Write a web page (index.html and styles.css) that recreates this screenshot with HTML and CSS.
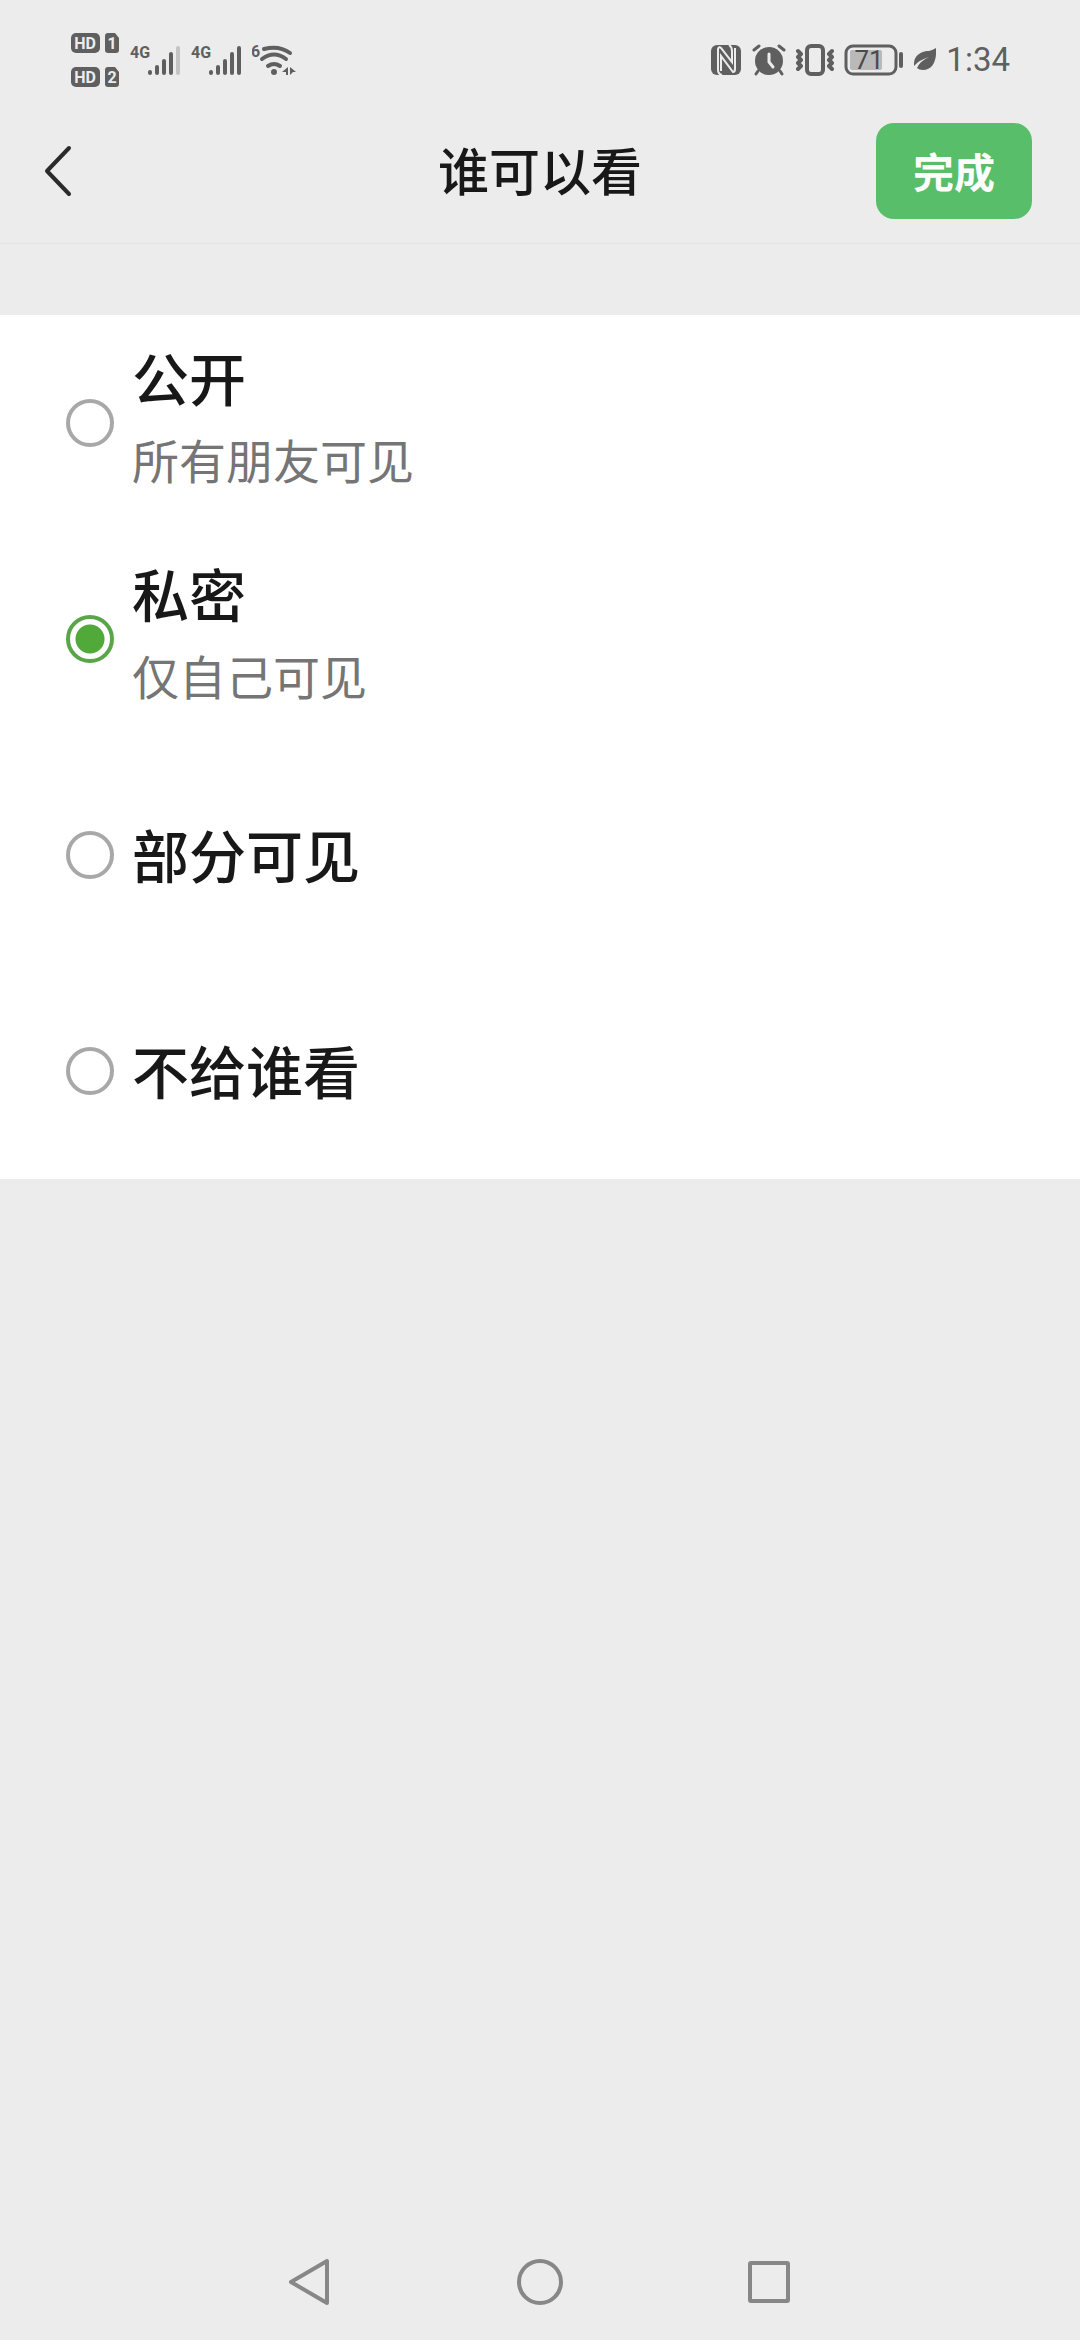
FILE: index.html
```html
<!DOCTYPE html>
<html lang="zh-CN">
<head>
<meta charset="utf-8">
<meta name="viewport" content="width=device-width, initial-scale=1">
<title>谁可以看</title>
<link rel="stylesheet" href="styles.css">
</head>
<body>
<div class="screen">
  <div class="status">
    <div class="status-group">
      <svg class="icon" width="49" height="54" viewBox="0 0 49 54">
        <rect x="0" y="0" width="29" height="20" rx="5"/>
        <text class="cut" x="14" y="16" font-size="16" text-anchor="middle">HD</text>
        <path d="M37 0h7l4 5v12a3 3 0 0 1-3 3h-8a3 3 0 0 1-3-3V3a3 3 0 0 1 3-3z"/>
        <text class="cut" x="41" y="16" font-size="16" text-anchor="middle">1</text>
        <rect x="0" y="34" width="29" height="20" rx="5"/>
        <text class="cut" x="14" y="50" font-size="16" text-anchor="middle">HD</text>
        <path d="M37 34h7l4 5v12a3 3 0 0 1-3 3h-8a3 3 0 0 1-3-3V37a3 3 0 0 1 3-3z"/>
        <text class="cut" x="41" y="50" font-size="16" text-anchor="middle">2</text>
      </svg>
      <svg class="icon" width="51" height="52" viewBox="0 -10 51 52">
        <text x="0" y="14" font-size="16">4G</text>
        <path class="stroke bar" d="M20 28v1M27 23v6M34 17v12M41 10v19"/>
        <path class="stroke bar weak" d="M48 4v25"/>
      </svg>
      <svg class="icon" width="51" height="52" viewBox="0 -10 51 52">
        <text x="0" y="14" font-size="16">4G</text>
        <path class="stroke bar" d="M20 28v1M27 23v6M34 17v12M41 10v19M48 4v25"/>
      </svg>
      <svg class="icon" width="46" height="52" viewBox="0 -10 46 52">
        <text x="-1" y="13" font-size="16">6</text>
        <path class="stroke" stroke-width="4" stroke-linecap="round" d="M12 5Q27 1 38 9M10 15Q22 6 34 15M16 22Q22 18 28 22"/>
        <circle cx="22" cy="28" r="3"/>
        <path d="M36 23v8h-2v-3h-4zM38 23l6 5h-3l-3 3z"/>
      </svg>
    </div>
    <div class="status-group">
      <svg class="icon" width="31" height="32" viewBox="0 0 31 32">
        <rect x="0" y="1" width="30" height="30" rx="6"/>
        <path d="M11 31Q7 30 7 26V5Q8 2 10 4L21 18V7Q21 3 18 1M10 27V12L22 28Q24 28 24 25V4" fill="none" stroke="#ececec" stroke-width="2"/>
      </svg>
      <svg class="icon" width="34" height="32" viewBox="0 0 34 32">
        <circle cx="17" cy="17" r="14"/>
        <path class="stroke" stroke-width="3" stroke-linecap="round" d="M2 6l5-4M27 2l5 4M6 27l-2 3M28 27l2 3"/>
        <path d="M17 10v8l4 5" fill="none" stroke="#ececec" stroke-width="3" stroke-linecap="round"/>
      </svg>
      <svg class="icon" width="38" height="32" viewBox="0 0 38 32">
        <rect class="stroke" x="11" y="2" width="16" height="28" rx="4" stroke-width="4"/>
        <path class="stroke" stroke-width="4" stroke-linejoin="round" stroke-linecap="round" d="M2 7l3 3-3 3 3 3-3 3 3 3-3 3M36 7l-3 3 3 3-3 3 3 3-3 3 3 3"/>
      </svg>
      <svg class="icon" width="60" height="32" viewBox="0 0 60 32">
        <rect class="stroke" x="2" y="2" width="50" height="28" rx="7" stroke-width="3"/>
        <rect class="charge" x="6" y="6" width="32" height="20" rx="2"/>
        <text class="level" x="25" y="25" font-size="26" text-anchor="middle">71</text>
        <rect x="55" y="8" width="4" height="16" rx="2"/>
      </svg>
      <svg class="icon" width="22" height="24" viewBox="0 0 22 24">
        <path d="M22 0C23 12 19 22 9 22Q5 22 3 20Q6 13 15 9Q5 12 0 18C-1 6 9 3 15 3Q19 2 22 0z"/>
      </svg>
      <span class="clock">1:34</span>
    </div>
  </div>

  <header class="header">
    <button class="back" type="button" aria-label="返回">
      <svg width="28" height="52" viewBox="0 0 28 52"><path d="M25 3L3 26l22 23" fill="none" stroke="#2b2b2b" stroke-width="4" stroke-linecap="round" stroke-linejoin="round"/></svg>
    </button>
    <h1 class="title">谁可以看</h1>
    <button class="done" type="button">完成</button>
  </header>

  <main class="options">
    <label class="option">
      <input class="radio" type="radio" name="visibility">
      <span class="option-text"><span class="name">公开</span><span class="hint">所有朋友可见</span></span>
    </label>
    <label class="option">
      <input class="radio" type="radio" name="visibility" checked>
      <span class="option-text"><span class="name">私密</span><span class="hint">仅自己可见</span></span>
    </label>
    <label class="option">
      <input class="radio" type="radio" name="visibility">
      <span class="option-text single"><span class="name">部分可见</span></span>
    </label>
    <label class="option">
      <input class="radio" type="radio" name="visibility">
      <span class="option-text single"><span class="name">不给谁看</span></span>
    </label>
  </main>

  <nav class="navbar">
    <button class="nav-key" type="button" aria-label="返回"><svg width="48" height="48" viewBox="0 0 48 48"><path d="M41 3v42L5 24z"/></svg></button>
    <button class="nav-key" type="button" aria-label="主屏幕"><svg width="48" height="48" viewBox="0 0 48 48"><circle cx="24" cy="24" r="21"/></svg></button>
    <button class="nav-key" type="button" aria-label="最近任务"><svg width="48" height="48" viewBox="0 0 48 48"><rect x="4" y="5" width="38" height="38" rx="1"/></svg></button>
  </nav>
</div>
</body>
</html>
```
FILE: styles.css
```css
* {
  box-sizing: border-box;
}

body {
  margin: 0;
  background: #ececec;
  color: #181818;
  font-family: "Noto Sans CJK SC", sans-serif;
}

button {
  padding: 0;
  border: 0;
  background: none;
  font-family: inherit;
}

svg {
  display: block;
}

.screen {
  display: flex;
  flex-direction: column;
  min-height: 100vh;
}

.status {
  display: flex;
  justify-content: space-between;
  height: 100px;
  padding: 20px 70px 0 71px;
}

.status-group {
  display: flex;
  align-items: center;
  height: 80px;
  gap: 10px;
}

.icon {
  fill: #5f5f5f;
  font-family: Roboto, sans-serif;
  font-weight: 700;
}

.icon .cut {
  fill: #ececec;
}

.icon .stroke {
  fill: none;
  stroke: #5f5f5f;
}

.icon .bar {
  stroke-width: 4;
  stroke-linecap: round;
}

.icon .weak {
  stroke: #c4c4c4;
}

.icon .charge {
  fill: #b9b9b9;
}

.icon .level {
  fill: #4a4a4a;
  font-weight: 400;
}

.clock {
  color: #5f5f5f;
  font: 400 33px/40px Roboto, sans-serif;
}

.header {
  display: grid;
  grid-template-columns: 1fr auto 1fr;
  align-items: center;
  height: 144px;
  padding: 0 44px 2px;
  border-bottom: 1px solid #e4e4e4;
}

.back {
  justify-self: start;
}

.title {
  margin: 0;
  padding-bottom: 4px;
  font-size: 51px;
  font-weight: 500;
  line-height: 72px;
}

.done {
  justify-self: end;
  width: 156px;
  height: 96px;
  margin-right: 4px;
  padding-bottom: 2px;
  border-radius: 18px;
  background: #58be6a;
  color: #fff;
  font-size: 41px;
  font-weight: 700;
  line-height: 60px;
}

.options {
  margin-top: 71px;
  background: #fff;
}

.option {
  display: flex;
  align-items: center;
  gap: 18px;
  height: 216px;
  padding-left: 66px;
}

.radio {
  appearance: none;
  flex: none;
  width: 48px;
  height: 48px;
  margin: 0;
  border: 4px solid #a8a8a8;
  border-radius: 50%;
}

.radio:checked {
  border-color: #5aa548;
  background: radial-gradient(circle, #50a939 14px, transparent 15px);
}

.option-text {
  display: flex;
  flex-direction: column;
  padding-bottom: 12px;
}

.single {
  padding-bottom: 4px;
}

.name {
  font-size: 57px;
  font-weight: 500;
  line-height: 84px;
}

.hint {
  color: #757575;
  font-size: 47px;
  line-height: 82px;
}

.navbar {
  display: flex;
  justify-content: center;
  gap: 182px;
  margin-top: auto;
  padding: 34px 0;
}

.nav-key svg {
  fill: none;
  stroke: #878787;
  stroke-width: 4;
  stroke-linejoin: round;
}
```
